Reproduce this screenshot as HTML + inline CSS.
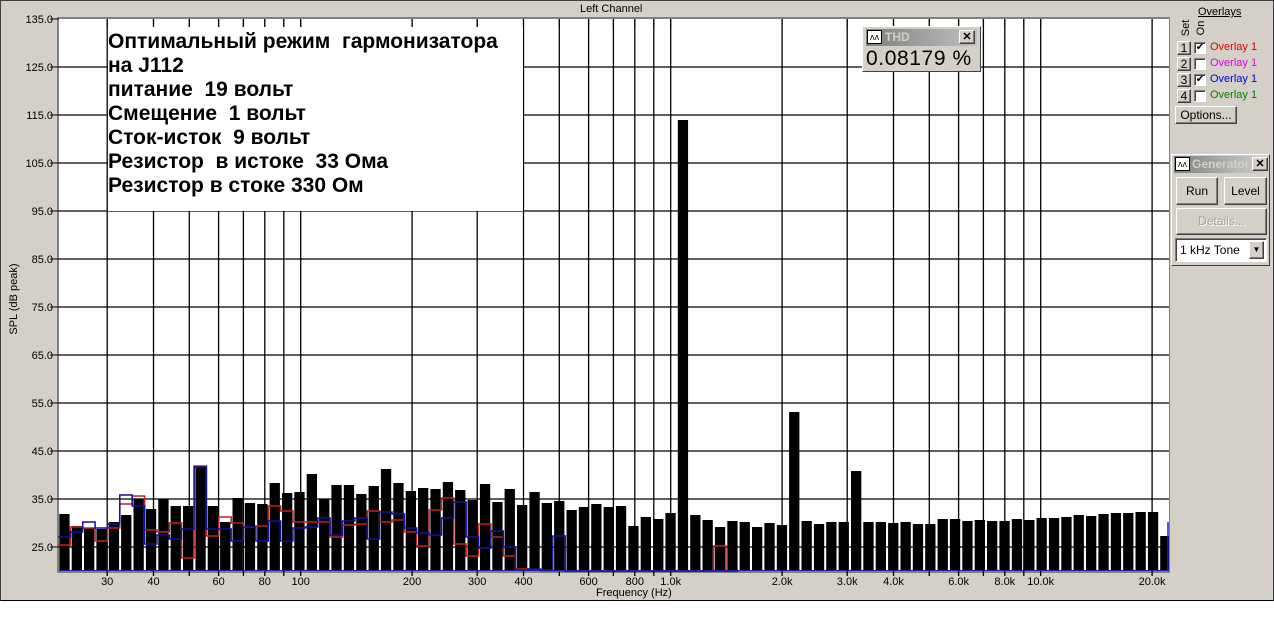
<!DOCTYPE html>
<html><head><meta charset="utf-8">
<style>
*{margin:0;padding:0;box-sizing:border-box}
body{width:1274px;height:637px;background:#fff;position:relative;overflow:hidden;font-family:"Liberation Sans",Arial,sans-serif}
#app{position:absolute;left:0;top:0;width:1274px;height:601px;background:#d4d0c8;border:1px solid #404040;border-bottom:1px solid #000}
.t{position:absolute;font-size:11px;color:#000;white-space:nowrap}
.btn{position:absolute;background:#d4d0c8;border:1px solid;border-color:#fff #404040 #404040 #fff;box-shadow:inset -1px -1px 0 #808080;font-size:12px;text-align:center}
.cb{position:absolute;width:12px;height:12px;background:#fff;border:1px solid;border-color:#808080 #fff #fff #808080;box-shadow:inset 1px 1px 0 #404040;font-size:10px;line-height:10px;text-align:center}
</style></head><body>
<div id="app"></div>
<div class="t" style="left:580px;top:3px">Left Channel</div>
<div class="t" style="left:596px;top:587px">Frequency (Hz)</div>
<div class="t" style="left:-28px;top:293px;transform:rotate(-90deg);width:84px;text-align:center">SPL (dB peak)</div>
<svg id="plot" style="position:absolute;left:0;top:0" width="1274" height="637" xmlns="http://www.w3.org/2000/svg"></svg>
<div style="position:absolute;left:108px;top:27px;width:415px;height:184px;background:#fff;font-weight:bold;font-size:21px;line-height:24px;color:#000;font-family:'Liberation Sans','DejaVu Sans',sans-serif">
<div style="position:absolute;left:0;top:3px;white-space:nowrap">Оптимальный режим&nbsp; гармонизатора<br>на J112<br>питание&nbsp; 19 вольт<br>Смещение&nbsp; 1 вольт<br>Сток-исток&nbsp; 9 вольт<br>Резистор&nbsp; в истоке&nbsp; 33 Ома<br>Резистор в стоке 330 Ом</div></div>
<!-- THD window -->
<div style="position:absolute;left:862px;top:26px;width:119px;height:46px;background:#d4d0c8;border:1px solid;border-color:#fff #404040 #404040 #fff">
<div style="position:absolute;left:3px;top:2px;width:111px;height:17px;background:linear-gradient(90deg,#808080,#c0c0c0)"></div>
<div style="position:absolute;left:4px;top:3px;width:15px;height:14px;background:#fff;border:1px solid #000;font-size:9px;line-height:12px;text-align:center">ʌʌ</div>
<div style="position:absolute;left:22px;top:3px;color:#d4d0c8;font-weight:bold;font-size:12px">THD</div>
<div class="btn" style="left:96px;top:3px;width:16px;height:14px;font-size:11px;line-height:12px;font-weight:bold">✕</div>
<div style="position:absolute;left:3px;top:20px;font-size:21px;letter-spacing:0.6px;color:#000;white-space:nowrap">0.08179 %</div>
</div>
<!-- overlays -->
<div class="t" style="left:1198px;top:6px;text-decoration:underline">Overlays</div>
<div class="t" style="left:1176px;top:22px;transform:rotate(-90deg);width:20px;text-align:center">Set</div>
<div class="t" style="left:1191px;top:22px;transform:rotate(-90deg);width:20px;text-align:center">On</div>
<div class="btn" style="left:1177px;top:41px;width:14px;height:14px;line-height:12px">1</div>
<div class="btn" style="left:1177px;top:57px;width:14px;height:14px;line-height:12px">2</div>
<div class="btn" style="left:1177px;top:73px;width:14px;height:14px;line-height:12px">3</div>
<div class="btn" style="left:1177px;top:89px;width:14px;height:14px;line-height:12px">4</div>
<div class="cb" style="left:1194px;top:42px">✔</div>
<div class="cb" style="left:1194px;top:58px"></div>
<div class="cb" style="left:1194px;top:74px">✔</div>
<div class="cb" style="left:1194px;top:90px"></div>
<div class="t" style="left:1210px;top:41px;color:#e00000">Overlay 1</div>
<div class="t" style="left:1210px;top:57px;color:#e000e0">Overlay 1</div>
<div class="t" style="left:1210px;top:73px;color:#0000d0">Overlay 1</div>
<div class="t" style="left:1210px;top:89px;color:#008000">Overlay 1</div>
<div class="btn" style="left:1175px;top:106px;width:62px;height:18px;line-height:16px">Options...</div>
<!-- generator -->
<div style="position:absolute;left:1171px;top:154px;width:99px;height:112px;background:#d4d0c8;border:1px solid;border-color:#fff #404040 #404040 #fff">
<div style="position:absolute;left:2px;top:1px;width:93px;height:17px;background:linear-gradient(90deg,#808080,#d0d0d0)"></div>
<div style="position:absolute;left:3px;top:2px;width:15px;height:14px;background:#fff;border:1px solid #000;font-size:9px;line-height:12px;text-align:center">ʌʌ</div>
<div style="position:absolute;left:20px;top:2px;color:#d4d0c8;font-weight:bold;font-size:12px;width:60px;overflow:hidden;white-space:nowrap">Generator</div>
<div class="btn" style="left:80px;top:2px;width:16px;height:14px;font-size:11px;line-height:12px;font-weight:bold">✕</div>
<div class="btn" style="left:4px;top:22px;width:42px;height:28px;line-height:26px">Run</div>
<div class="btn" style="left:52px;top:22px;width:43px;height:28px;line-height:26px">Level</div>
<div class="btn" style="left:4px;top:53px;width:91px;height:27px;line-height:25px;color:#a0a0a0;text-shadow:1px 1px 0 #fff">Details...</div>
<div style="position:absolute;left:3px;top:83px;width:92px;height:24px;background:#fff;border:1px solid;border-color:#808080 #fff #fff #808080;box-shadow:inset 1px 1px 0 #404040;font-size:12px;line-height:22px;padding-left:4px">1 kHz Tone</div>
<div class="btn" style="left:77px;top:86px;width:15px;height:18px;font-size:8px;line-height:16px">▼</div>
</div>
<script>
var s=document.getElementById('plot'),h='';
var L=59,R=1169,T=19,B=571;
function X(f){return 300.7+370*Math.log10(f/100);}
function Y(d){return 19+(135-d)*4.8;}
h+='<rect x="57" y="17" width="1113" height="556" fill="#808080"/>';
h+='<rect x="'+L+'" y="'+T+'" width="'+(R-L)+'" height="'+(B-T)+'" fill="#fff"/>';
var fs=[30,40,50,60,70,80,90,100,200,300,400,500,600,700,800,900,1000,2000,3000,4000,5000,6000,7000,8000,9000,10000,20000];
fs.forEach(function(f){var x=X(f).toFixed(1);h+='<line x1="'+x+'" y1="'+T+'" x2="'+x+'" y2="'+(B+5)+'" stroke="#000" stroke-width="1.3"/>';});
for(var d=125;d>=25;d-=10){var y=Y(d);h+='<line x1="'+L+'" y1="'+y+'" x2="'+R+'" y2="'+y+'" stroke="#000" stroke-width="1.3"/>';}
for(var d=135;d>=25;d-=10){var y=Y(d);h+='<line x1="50" y1="'+y+'" x2="'+L+'" y2="'+y+'" stroke="#000"/>';h+='<text x="53" y="'+(y+4)+'" font-size="11" text-anchor="end" font-family="Liberation Sans">'+d.toFixed(1)+'</text>';}
var tops=[514,526,528,529,522,515,499,509,499,506,506,466,506,522,498,503,504,483,493,492,474,499,485,485,494,486,469,483,491,488,489,482,490,500,484,502,489,505,492,503,501,510,507,504,507,506,526,517,519,513,120,515,520,527,521,522,527,523,525,412,521,524,522,522,471,522,522,523,522,524,524,519,519,521,520,521,521,519,520,518,518,517,515,516,514,513,513,512,512,536];
tops.forEach(function(t,i){var x=59.3+12.37*i;var w=10.3;if(x+w>R)w=R-x;h+='<rect x="'+x.toFixed(1)+'" y="'+t+'" width="'+w.toFixed(1)+'" height="'+(B-t)+'" fill="#000"/>';});
function step(arr,col){var p='';arr.forEach(function(v,i){var x0=59+12.37*i-1,x1=x0+12.37;p+=(i?'L':'M')+x0.toFixed(1)+' '+v+'L'+x1.toFixed(1)+' '+v;});return '<path d="'+p+'" fill="none" stroke="'+col+'" stroke-width="1.5"/>';}
var red=[545,527,528,541,528,504,496,530,532,523,558,466,536,517,523,527,526,506,511,522,522,522,537,525,524,511,522,520,532,546,510,498,544,556,524,537,556,569,570,571,571,571,571,571,571,571,571,571,571,571,571,571,571,546,571];
var blue=[537,532,522,528,524,495,506,544,535,539,529,467,529,529,541,527,541,521,541,528,527,518,535,521,518,539,512,514,528,533,535,518,502,537,548,531,547,570,569,570,536,571,571,571,571,571,571,571,571,571,571,571,571,571,571];
h+=step(red,'#c02020');h+=step(blue,'#1010a0');
h+='<line x1="1168" y1="522" x2="1168" y2="571" stroke="#2020c0" stroke-width="1.5"/>';
h+='<line x1="'+L+'" y1="570.5" x2="'+R+'" y2="570.5" stroke="#2020a0" stroke-width="1"/>';
fs.forEach(function(f){var x=X(f);h+='<line x1="'+x+'" y1="'+T+'" x2="'+x+'" y2="'+(T+8)+'" stroke="#000"/>';});
var lab=[[30,'30'],[40,'40'],[60,'60'],[80,'80'],[100,'100'],[200,'200'],[300,'300'],[400,'400'],[600,'600'],[800,'800'],[1000,'1.0k'],[2000,'2.0k'],[3000,'3.0k'],[4000,'4.0k'],[6000,'6.0k'],[8000,'8.0k'],[10000,'10.0k'],[20000,'20.0k']];
lab.forEach(function(a){h+='<text x="'+X(a[0]).toFixed(1)+'" y="585" font-size="11" text-anchor="middle" font-family="Liberation Sans">'+a[1]+'</text>';});
s.innerHTML=h;
</script>
</body></html>
